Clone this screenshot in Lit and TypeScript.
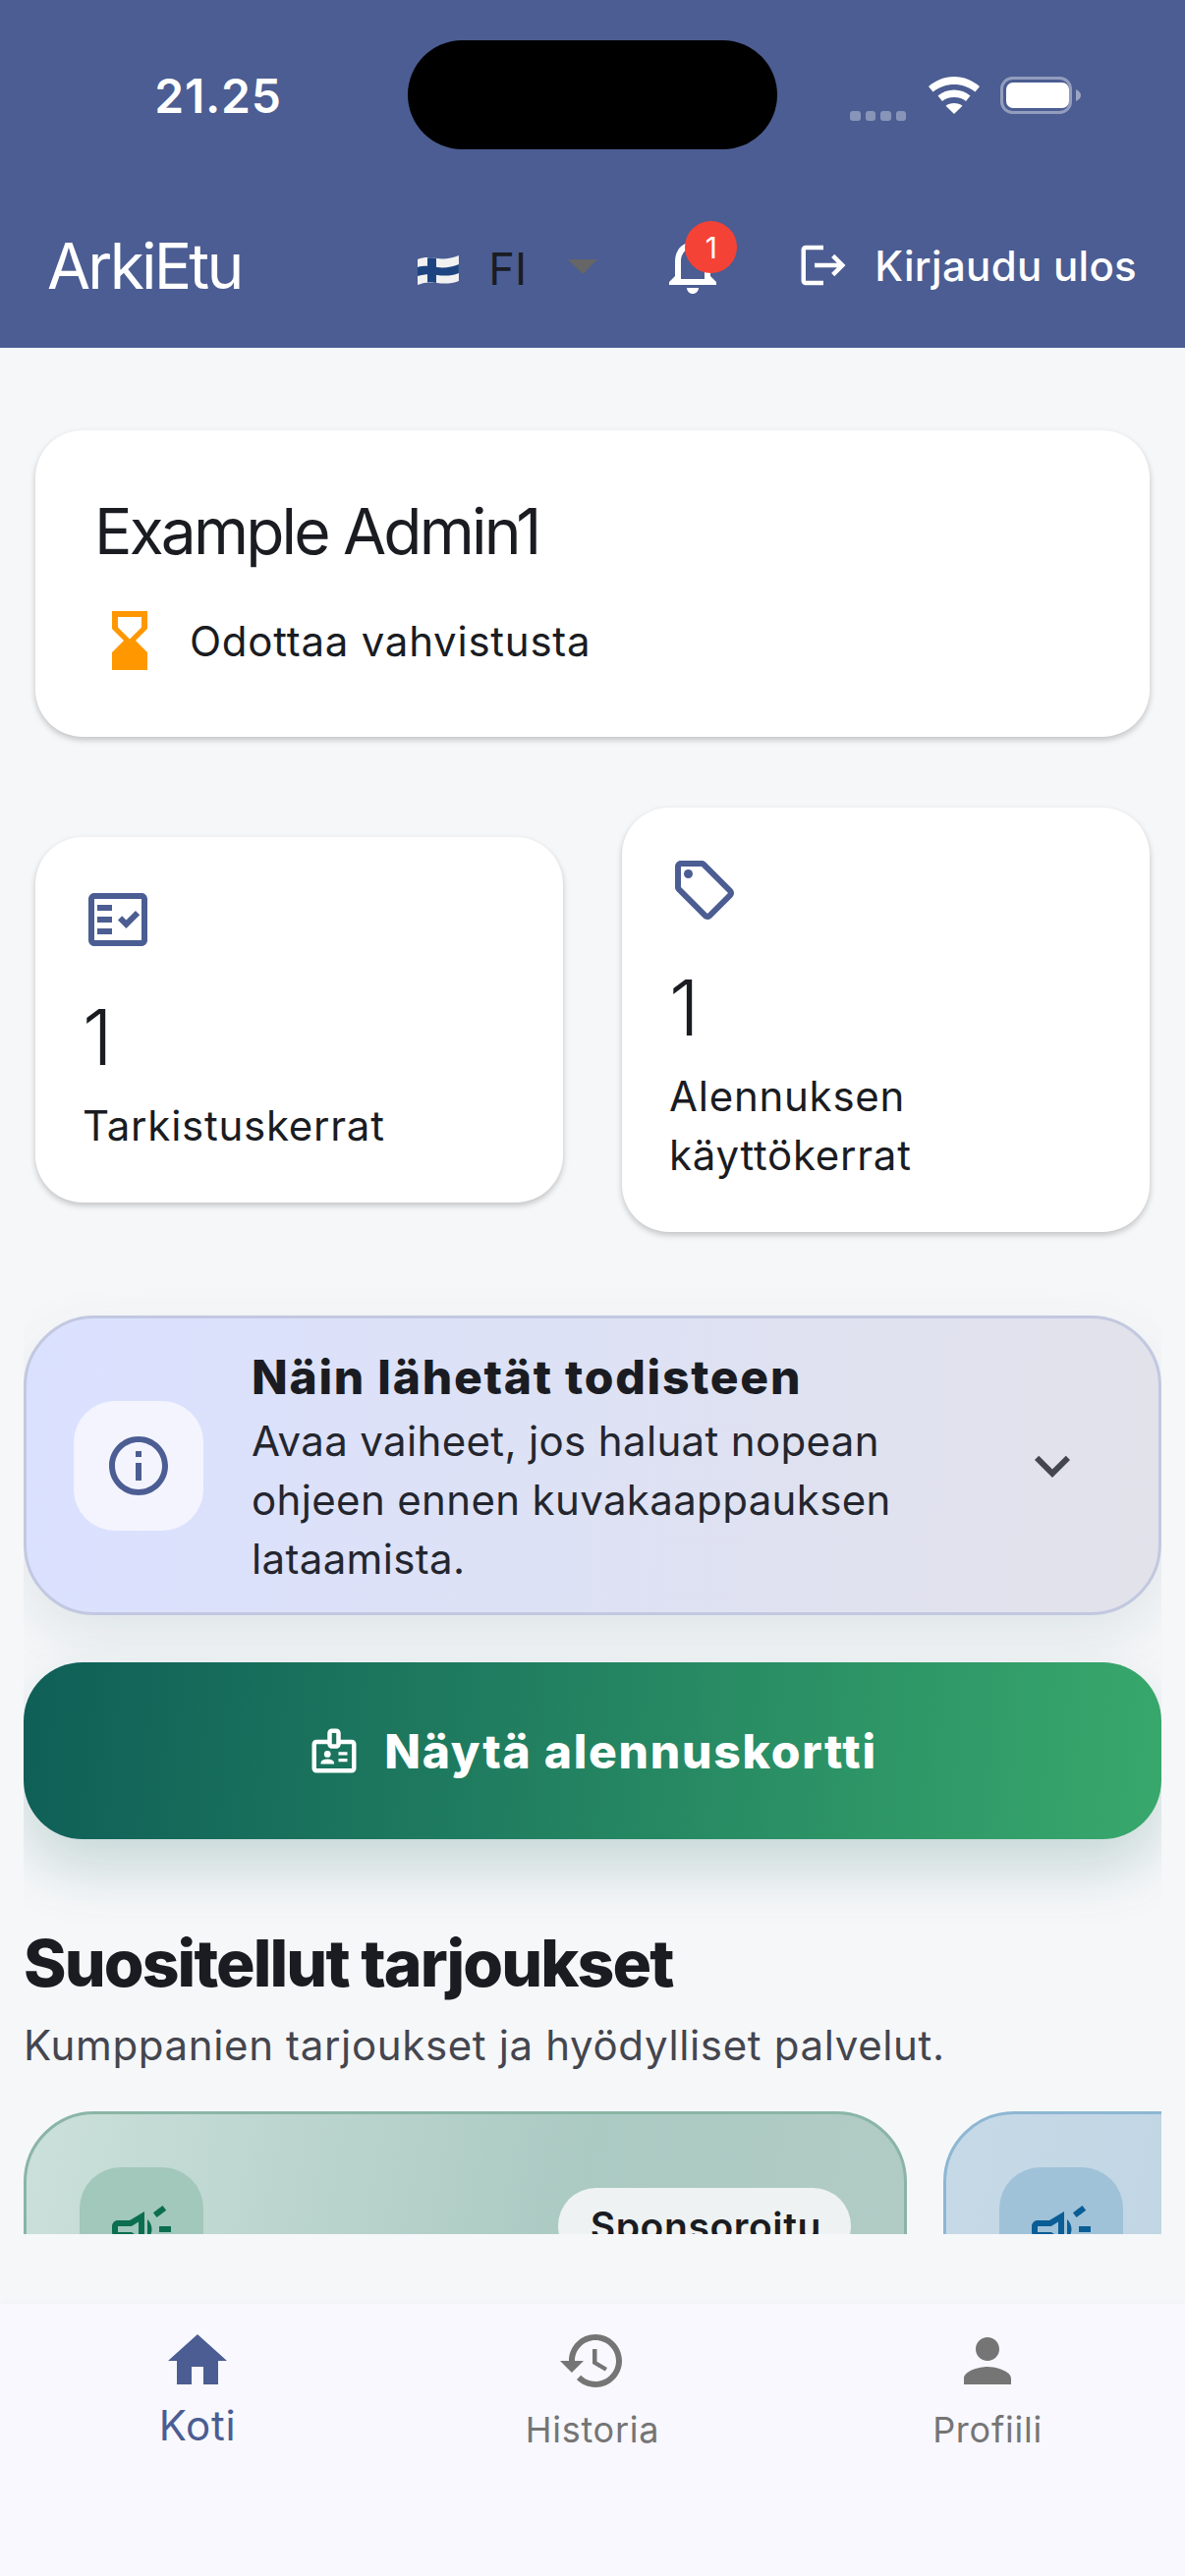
import { LitElement, html, css, svg } from "lit";
import { customElement } from "lit/decorators.js";

const icon = (paths: unknown, cls = "") => html`<svg class="ic ${cls}" viewBox="0 0 24 24" fill="currentColor">${paths}</svg>`;

const hourglass = svg`<path d="M18 22l-.01-6L14 12l3.99-4.01L18 2H6v6l4 4-4 3.99V22h12zM8 7.5V4h8v3.5l-4 4-4-4z"/>`;
const factCheck = svg`<path fill-rule="evenodd" d="M20 3H4c-1.1 0-2 .9-2 2v14c0 1.1.9 2 2 2h16c1.1 0 2-.9 2-2V5c0-1.1-.9-2-2-2zm0 16H4V5h16v14z"/><path d="M19.41 10.42l-1.42-1.42-3.17 3.17-1.41-1.42L12 12.16 14.82 15zM5 7h5v2H5zM5 11h5v2H5zM5 15h5v2H5z"/>`;
const offer = svg`<path d="M21.41 11.58l-9-9C12.05 2.22 11.55 2 11 2H4c-1.1 0-2 .9-2 2v7c0 .55.22 1.05.59 1.42l9 9c.36.36.86.58 1.41.58s1.05-.22 1.41-.59l7-7c.37-.36.59-.86.59-1.41s-.23-1.06-.59-1.42zM13 20.01L4 11V4h7v-.01l9 9-7 7.02z"/><circle cx="6.5" cy="6.5" r="1.5"/>`;
const info = svg`<path d="M11 7h2v2h-2zm0 4h2v6h-2zm1-9C6.48 2 2 6.48 2 12s4.48 10 10 10 10-4.48 10-10S17.52 2 12 2zm0 18c-4.41 0-8-3.59-8-8s3.59-8 8-8 8 3.59 8 8-3.59 8-8 8z"/>`;
const expand = svg`<path d="M16.59 8.59L12 13.17 7.41 8.59 6 10l6 6 6-6z"/>`;
const badge = svg`<path d="M20 7h-5V4c0-1.1-.9-2-2-2h-2c-1.1 0-2 .9-2 2v3H4c-1.1 0-2 .9-2 2v11c0 1.1.9 2 2 2h16c1.1 0 2-.9 2-2V9c0-1.1-.9-2-2-2zM11 4h2v5h-2V4zm9 16H4V9h5c0 1.1.9 2 2 2h2c1.1 0 2-.9 2-2h5v11z"/><circle cx="9" cy="13.5" r="1.5"/><path d="M11.08 16.18c-.64-.28-1.34-.43-2.08-.43s-1.44.15-2.08.43C6.36 16.42 6 16.96 6 17.57V18h6v-.43c0-.61-.36-1.15-.92-1.39zM14 12.5h4V14h-4zM14 15.5h4V17h-4z"/>`;
const campaign = svg`<path d="M18 11v2h4v-2h-4zm-2 6.61c.96.71 2.21 1.65 3.2 2.39.4-.53.8-1.07 1.2-1.6-.99-.74-2.24-1.68-3.2-2.4-.4.54-.8 1.08-1.2 1.61zM20.4 5.6c-.4-.53-.8-1.07-1.2-1.6-.99.74-2.24 1.68-3.2 2.4.4.53.8 1.07 1.2 1.6.96-.72 2.21-1.65 3.2-2.4zM4 9c-1.1 0-2 .9-2 2v2c0 1.1.9 2 2 2h1v4h2v-4h1l5 3V6L8 9H4zm5.03 1.71L11 9.53v4.94l-1.97-1.18-.48-.29H4v-2h4.55l.48-.29zM15.5 12c0-1.33-.58-2.53-1.5-3.35v6.69c.92-.81 1.5-2.01 1.5-3.34z"/>`;
const home = svg`<path d="M10 20v-6h4v6h5v-8h3L12 3 2 12h3v8z"/>`;
const history = svg`<path d="M13 3c-4.97 0-9 4.03-9 9H1l3.89 3.89.07.14L9 12H6c0-3.87 3.13-7 7-7s7 3.13 7 7-3.13 7-7 7c-1.93 0-3.68-.79-4.94-2.06l-1.42 1.42C8.27 19.99 10.51 21 13 21c4.97 0 9-4.03 9-9s-4.03-9-9-9zm-1 5v5l4.28 2.54.72-1.21-3.5-2.08V8H12z"/>`;
const person = svg`<path d="M12 12c2.21 0 4-1.79 4-4s-1.79-4-4-4-4 1.79-4 4 1.79 4 4 4zm0 2c-2.67 0-8 1.34-8 4v2h16v-2c0-2.66-5.33-4-8-4z"/>`;
const bell = svg`<path d="M12 22c1.1 0 2-.9 2-2h-4c0 1.1.9 2 2 2zm6-6v-5c0-3.07-1.63-5.64-4.5-6.32V4c0-.83-.67-1.5-1.5-1.5s-1.5.67-1.5 1.5v.68C7.64 5.36 6 7.92 6 11v5l-2 2v1h16v-1l-2-2zm-2 1H8v-6c0-2.48 1.51-4.5 4-4.5s4 2.02 4 4.5v6z"/>`;
const logout = svg`<path d="M17 7l-1.41 1.41L18.17 11H8v2h10.17l-2.58 2.58L17 17l5-5zM4 5h8V3H4c-1.1 0-2 .9-2 2v14c0 1.1.9 2 2 2h8v-2H4V5z"/>`;

@customElement("app-root")
export class AppRoot extends LitElement {
  static styles = css`
    :host {
      display: flex;
      flex-direction: column;
      height: 2622px;
      background: #f6f7f9;
      color: #1a1c22;
      font-family: Inter, "Liberation Sans", sans-serif;
      overflow: hidden;
    }
    .ic {
      width: 72px;
      height: 72px;
      display: block;
      flex: none;
    }

    .header {
      background: #4b5d92;
      color: #fff;
      flex: none;
    }
    .status {
      height: 186px;
      box-sizing: border-box;
      padding-top: 41px;
      display: flex;
      align-items: flex-start;
    }
    .time-slot {
      width: 415px;
      height: 111px;
      display: flex;
      align-items: center;
      justify-content: center;
      box-sizing: border-box;
      padding: 2px 0 0 29px;
      font-size: 48px;
      font-weight: 600;
      letter-spacing: 0.8px;
    }
    .island {
      width: 376px;
      height: 111px;
      border-radius: 56px;
      background: #000;
    }
    .status-icons {
      margin-left: 74px;
      display: flex;
      align-items: center;
      height: 111px;
    }
    .dots {
      display: flex;
      gap: 5px;
      margin-top: 42px;
      margin-right: 23px;
    }
    .dots i {
      width: 10.5px;
      height: 10px;
      border-radius: 3px;
      background: rgba(255, 255, 255, 0.35);
    }
    .wifi {
      width: 52px;
      height: 38px;
      margin-right: 21px;
      margin-top: 1px;
    }
    .battery {
      width: 82px;
      height: 38px;
      margin-top: 1px;
    }

    .toolbar {
      height: 168px;
      display: flex;
      align-items: center;
      padding: 0 49px 0 48px;
    }
    .title {
      font-size: 64px;
      font-weight: 400;
      width: 378px;
      letter-spacing: -2.8px;
    }
    .flag {
      width: 42px;
      height: 32px;
      display: block;
      margin-top: 9px;
    }
    .lang {
      font-size: 45px;
      color: #1a1c22;
      margin-left: 30px;
      width: 49px;
      margin-top: 6px;
    }
    .caret {
      width: 0;
      height: 0;
      border-left: 15px solid transparent;
      border-right: 15px solid transparent;
      border-top: 15px solid #666;
      margin-left: 32px;
      margin-top: 2px;
    }
    .bell {
      position: relative;
      margin-left: 61px;
      margin-top: -2px;
    }
    .count {
      position: absolute;
      left: 28px;
      top: -8px;
      width: 53px;
      height: 53px;
      border-radius: 50%;
      background: #f44336;
      font-size: 30px;
      display: flex;
      align-items: center;
      justify-content: center;
    }
    .logout {
      display: flex;
      align-items: center;
      margin-left: 70px;
      gap: 25px;
      font-size: 42px;
      font-weight: 500;
      letter-spacing: 0.3px;
      white-space: nowrap;
    }
    .logout .ic {
      width: 54px;
      height: 54px;
    }

    .main {
      height: 1920px;
      margin: 0 24px;
      overflow: hidden;
      flex: none;
    }
    .card {
      background: #fff;
      border-radius: 48px;
      box-shadow: 0 3px 6px rgba(0, 0, 0, 0.22);
    }
    .profile {
      margin: 84px 12px 0;
      height: 312px;
      box-sizing: border-box;
      padding: 58px 60px 0;
    }
    .name {
      font-size: 64px;
      line-height: 90px;
      letter-spacing: -2.8px;
    }
    .state {
      display: flex;
      align-items: center;
      gap: 25px;
      margin-top: 30px;
      font-size: 42px;
      letter-spacing: 0.75px;
    }
    .state .ic {
      color: #ff9800;
    }
    .stats {
      margin: 72px 12px 0;
      display: flex;
      gap: 60px;
      align-items: center;
    }
    .stat {
      flex: 1;
      box-sizing: border-box;
      padding: 48px;
    }
    .stat .ic {
      color: #4b5d92;
    }
    .stat-num {
      font-size: 78px;
      line-height: 96px;
      margin-top: 36px;
      font-weight: 300;
    }
    .stat-label {
      font-size: 42px;
      line-height: 60px;
      margin-top: 12px;
      letter-spacing: 0.75px;
    }

    .info {
      margin-top: 85px;
      height: 305px;
      box-sizing: border-box;
      border: 3px solid #c2c8e0;
      border-radius: 72px;
      background: linear-gradient(95deg, #dae1ff, #e2e2ea);
      box-shadow: 0 24px 60px rgba(20, 80, 80, 0.1);
      padding: 0 72px 0 48px;
      display: flex;
      align-items: center;
    }
    .info-box {
      width: 132px;
      height: 132px;
      border-radius: 42px;
      background: #f4f4ff;
      color: #4b5d92;
      display: flex;
      align-items: center;
      justify-content: center;
      flex: none;
    }
    .info-text {
      flex: 1;
      margin-left: 49px;
      padding-top: 6px;
    }
    .info-title {
      font-size: 48px;
      font-weight: 800;
      line-height: 58px;
      letter-spacing: 1.75px;
    }
    .info-body {
      margin-top: 6px;
      font-size: 42px;
      line-height: 60px;
      letter-spacing: 0.35px;
      color: #24262e;
    }
    .info .ic.chev {
      color: #44464f;
    }

    .show-card {
      margin-top: 48px;
      height: 180px;
      border-radius: 60px;
      background: linear-gradient(95deg, #0f5f57, #38a86c);
      box-shadow: 0 30px 60px rgba(15, 95, 85, 0.2);
      color: #fff;
      display: flex;
      align-items: center;
      justify-content: center;
      gap: 24px;
      font-size: 48px;
      font-weight: 800;
      letter-spacing: 1.75px;
    }
    .show-card .ic {
      width: 54px;
      height: 54px;
    }

    .sec-title {
      font-size: 66px;
      font-weight: 800;
      line-height: 84px;
      margin-top: 84px;
      letter-spacing: -1.9px;
    }
    .sec-sub {
      font-size: 42px;
      line-height: 60px;
      margin-top: 12px;
      color: #44464f;
      letter-spacing: 0.65px;
    }
    .offers {
      display: flex;
      gap: 37px;
      margin-top: 37px;
    }
    .offer {
      flex: none;
      width: 899px;
      height: 400px;
      box-sizing: border-box;
      border-radius: 72px;
      border: 3px solid;
      padding: 54px;
      display: flex;
      align-items: flex-start;
      justify-content: space-between;
    }
    .offer.green {
      border-color: #8ab5a6;
      background: linear-gradient(100deg, #cbe0da, #abcac2 60%, #b2ccc5);
    }
    .offer.blue {
      border-color: #8db7d3;
      background: linear-gradient(100deg, #c6d9e6, #b4cde0);
    }
    .offer-box {
      width: 126px;
      height: 126px;
      border-radius: 42px;
      display: flex;
      align-items: center;
      justify-content: center;
    }
    .green .offer-box {
      background: #a2c7bb;
      color: #0b6e4f;
    }
    .blue .offer-box {
      background: #9fc2d8;
      color: #0b5d96;
    }
    .pill {
      margin-top: 21px;
      padding: 15px 30px 15px 33px;
      border-radius: 48px;
      background: #eef2f3;
      font-size: 39px;
      font-weight: 600;
      letter-spacing: 0.6px;
    }

    .nav {
      margin-top: auto;
      height: 277px;
      background: #f8f8fe;
      box-shadow: 0 -3px 6px rgba(0, 0, 0, 0.02);
      display: flex;
      flex: none;
    }
    .nav-item {
      flex: 1;
      display: flex;
      flex-direction: column;
      align-items: center;
      padding-top: 22px;
      color: #757575;
      font-size: 36px;
      letter-spacing: 0.75px;
      line-height: 60px;
    }
    .nav-item.active {
      color: #4b5d92;
      font-size: 42px;
      line-height: 60px;
    }
    .nav-item span {
      margin-top: 4px;
    }
    .nav-item.active span {
      margin-top: 0;
    }
  `;

  render() {
    return html`
      <div class="header">
        <div class="status">
          <div class="time-slot">21.25</div>
          <div class="island"></div>
          <div class="status-icons">
            <div class="dots"><i></i><i></i><i></i><i></i></div>
            <svg class="wifi" viewBox="0 0 52 38" fill="#fff">
              <path d="M26 0c10 0 19 4 26 10l-4.500 5.500C41 10.500 34 8 26 8S11 10.500 4.500 15.500L0 10C7 4 16 0 26 0z" />
              <path d="M26 13.500c6.500 0 12 2.300 16.500 6l-4.500 5.500C35 22.500 31 21 26 21s-9 1.500-12 4L9.500 19.500c4.500-3.700 10-6 16.500-6z" />
              <path d="M26 27c3.500 0 6.300 1 8.500 2.800L26 38l-8.500-8.200C19.700 28 22.500 27 26 27z" />
            </svg>
            <svg class="battery" viewBox="0 0 82 38">
              <rect x="1.500" y="1.500" width="70" height="35" rx="11" fill="none" stroke="#fff" stroke-opacity=".4" stroke-width="3" />
              <rect x="6" y="6" width="64" height="26" rx="7" fill="#fff" />
              <path d="M77 13c3 1.500 5 3.500 5 6s-2 4.500-5 6z" fill="#fff" fill-opacity=".45" />
            </svg>
          </div>
        </div>
        <div class="toolbar">
          <div class="title">ArkiEtu</div>
          <svg class="flag" viewBox="0 0 42 32">
            <path d="M0 5c7-3 13-2 20-1s15 0 22-3v26c-7 3-15 3-22 2S7 28 0 31z" fill="#f1f1f1" />
            <path d="M0 13c7-2 13-1 20 0s15 0 22-3v9c-7 3-15 3-22 2S7 20 0 22z" fill="#1d4480" />
            <path d="M10 3.500c3-.500 7 0 9 .500v25c-3-.500-6-1-9-.500z" fill="#1d4480" />
          </svg>
          <div class="lang">FI</div>
          <div class="caret"></div>
          <div class="bell">${icon(bell)}<div class="count">1</div></div>
          <div class="logout">${icon(logout)}<span>Kirjaudu ulos</span></div>
        </div>
      </div>

      <div class="main">
        <div class="card profile">
          <div class="name">Example Admin1</div>
          <div class="state">${icon(hourglass)}<span>Odottaa vahvistusta</span></div>
        </div>

        <div class="stats">
          <div class="card stat">
            ${icon(factCheck)}
            <div class="stat-num">1</div>
            <div class="stat-label">Tarkistuskerrat</div>
          </div>
          <div class="card stat">
            ${icon(offer)}
            <div class="stat-num">1</div>
            <div class="stat-label">Alennuksen käyttökerrat</div>
          </div>
        </div>

        <div class="info">
          <div class="info-box">${icon(info)}</div>
          <div class="info-text">
            <div class="info-title">Näin lähetät todisteen</div>
            <div class="info-body">Avaa vaiheet, jos haluat nopean ohjeen ennen kuvakaappauksen lataamista.</div>
          </div>
          ${icon(expand, "chev")}
        </div>

        <div class="show-card">${icon(badge)}<span>Näytä alennuskortti</span></div>

        <div class="sec-title">Suositellut tarjoukset</div>
        <div class="sec-sub">Kumppanien tarjoukset ja hyödylliset palvelut.</div>

        <div class="offers">
          <div class="offer green">
            <div class="offer-box">${icon(campaign)}</div>
            <div class="pill">Sponsoroitu</div>
          </div>
          <div class="offer blue">
            <div class="offer-box">${icon(campaign)}</div>
            <div class="pill">Sponsoroitu</div>
          </div>
        </div>
      </div>

      <div class="nav">
        <div class="nav-item active">${icon(home)}<span>Koti</span></div>
        <div class="nav-item">${icon(history)}<span>Historia</span></div>
        <div class="nav-item">${icon(person)}<span>Profiili</span></div>
      </div>
    `;
  }
}
